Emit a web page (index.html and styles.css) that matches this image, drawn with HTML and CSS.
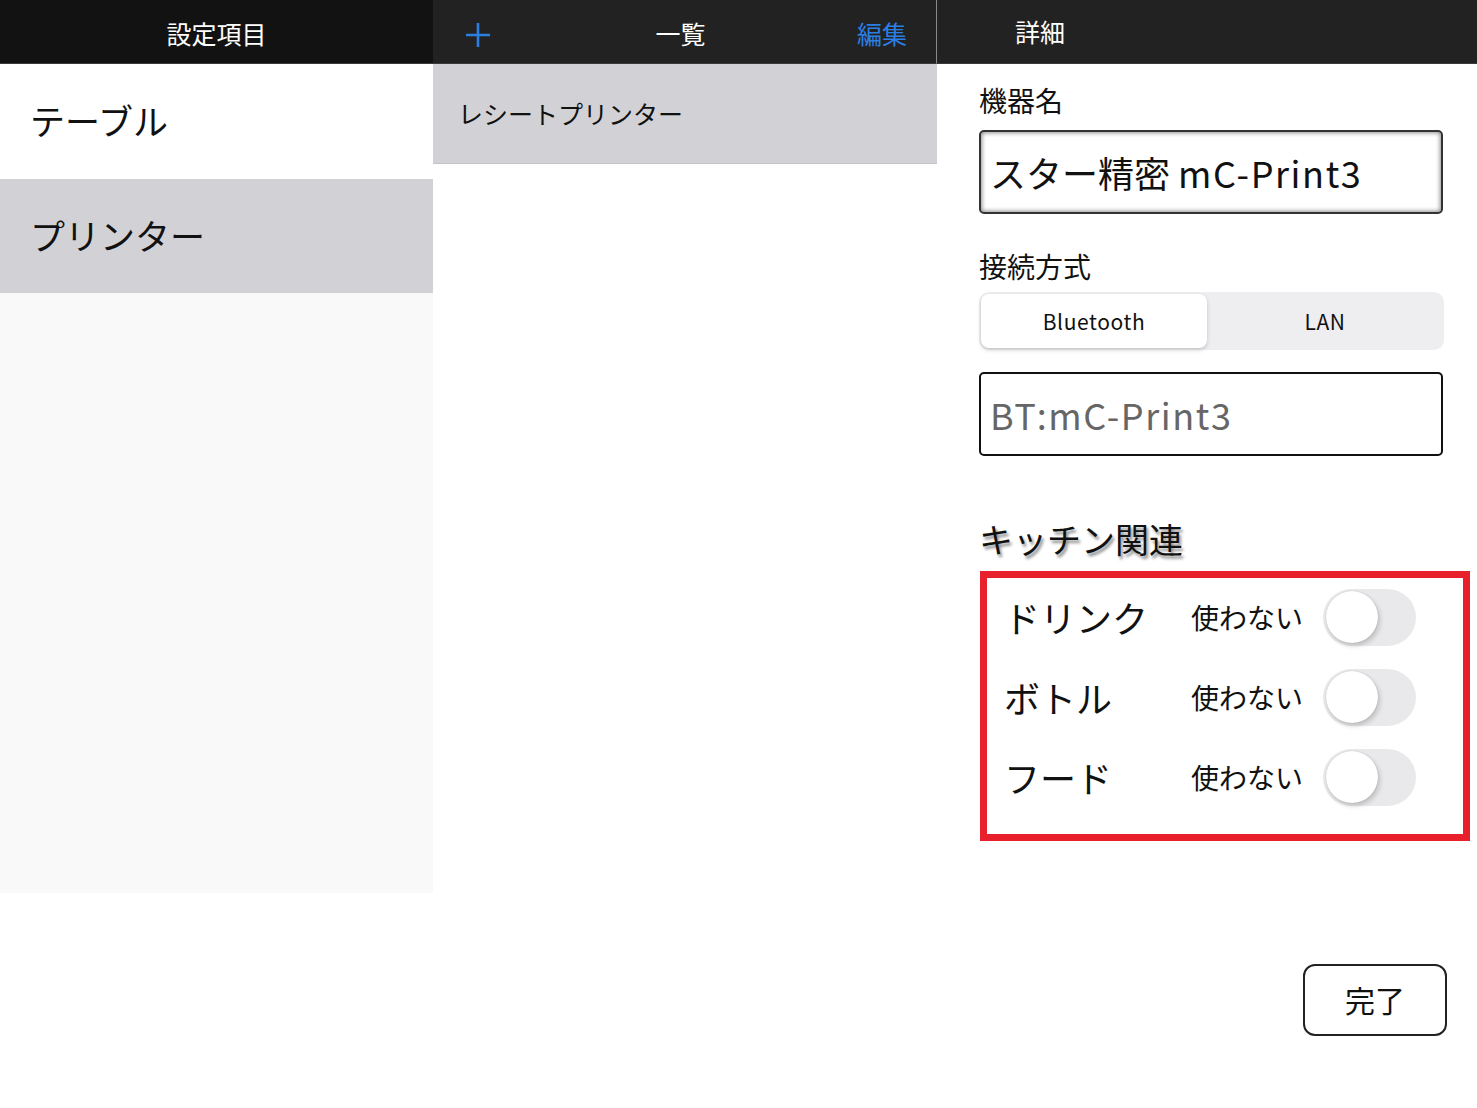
FILE: index.html
```html
<!DOCTYPE html>
<html lang="ja">
<head>
<meta charset="utf-8">
<title>設定</title>
<link rel="stylesheet" href="styles.css">
</head>
<body>
<div class="app">
  <section class="col col-left">
    <header class="bar bar-left"><span class="bar-title">設定項目</span></header>
    <div class="left-body">
      <div class="left-row">テーブル</div>
      <div class="left-row selected">プリンター</div>
      <div class="left-fill"></div>
    </div>
  </section>
  <section class="col col-mid">
    <header class="bar bar-mid">
      <svg class="plus" width="28" height="28" viewBox="0 0 28 28"><path d="M14 2V26M2 14H26" stroke="#2b7fe3" stroke-width="2.6" fill="none"/></svg>
      <span class="bar-title">一覧</span>
      <span class="bar-action">編集</span>
    </header>
    <div class="mid-row">レシートプリンター</div>
  </section>
  <section class="col col-right">
    <header class="bar bar-right"><span class="bar-title">詳細</span></header>
    <div class="detail">
      <div class="label l-name">機器名</div>
      <div class="field field-name">スター精密 <span class="latin">mC-Print3</span></div>
      <div class="label l-conn">接続方式</div>
      <div class="segment">
        <div class="seg seg-on">Bluetooth</div>
        <div class="seg">LAN</div>
      </div>
      <div class="field field-bt"><span class="latin">BT:mC-Print3</span></div>
      <div class="section-title">キッチン関連</div>
      <div class="kitchen">
        <div class="k-row"><span class="k-name">ドリンク</span><span class="k-state">使わない</span><span class="toggle"><span class="knob"></span></span></div>
        <div class="k-row"><span class="k-name">ボトル</span><span class="k-state">使わない</span><span class="toggle"><span class="knob"></span></span></div>
        <div class="k-row"><span class="k-name">フード</span><span class="k-state">使わない</span><span class="toggle"><span class="knob"></span></span></div>
      </div>
      <div class="done">完了</div>
    </div>
  </section>
</div>
</body>
</html>
```

FILE: styles.css
```css
* { box-sizing: border-box; }
html, body {
  margin: 0;
  padding: 0;
  background: #ffffff;
  font-family: "Noto Sans CJK JP", "Noto Sans", sans-serif;
  color: #111111;
}
.app {
  display: grid;
  grid-template-columns: 433px 504px 1fr;
  width: 1477px;
  height: 1108px;
  overflow: hidden;
}
.col { display: flex; flex-direction: column; }
.bar {
  height: 64px;
  display: flex;
  align-items: center;
  color: #ffffff;
  font-size: 25px;
  border-bottom: 1px solid #3a3a3a;
}
.bar-title { line-height: 1; }
.bar-left { background: #121212; justify-content: center; padding-top: 4px; }
.bar-mid {
  background: #222222;
  justify-content: space-between;
  padding: 4px 29px 0 31px;
  border-right: 1px solid #8a8a8a;
}
.bar-mid .bar-title { margin-left: 12px; }
.bar-action { color: #2b7fe3; line-height: 1; }
.plus { display: block; margin-top: 2px; }
.bar-right { background: #222222; padding-left: 78px; padding-bottom: 1px; }

.left-body { display: flex; flex-direction: column; }
.left-row {
  height: 115px;
  display: flex;
  align-items: center;
  padding-left: 30px;
  padding-bottom: 4px;
  font-size: 35px;
  background: #ffffff;
}
.left-row.selected { background: #d1d1d6; height: 114px; }
.left-fill { height: 600px; background: #f9f9f9; }

.mid-row {
  height: 100px;
  background: #d1d1d6;
  display: flex;
  align-items: center;
  padding-left: 25px;
  padding-bottom: 2px;
  font-size: 25px;
  border-bottom: 1px solid #c4c4c8;
}

.detail {
  display: flex;
  flex-direction: column;
  padding-left: 42px;
}
.label { font-size: 28px; line-height: 40px; }
.l-name { margin-top: 16px; }
.field {
  width: 464px;
  height: 84px;
  border: 2px solid #222;
  border-radius: 5px;
  display: flex;
  align-items: center;
  padding-left: 9px;
  font-size: 36px;
  line-height: 1;
  white-space: pre;
}
.latin { letter-spacing: 1.6px; }
.field-name {
  margin-top: 10px;
  border-color: #333;
  box-shadow: inset 0 0 4px 1px rgba(0,0,0,0.45);
  color: #111;
}
.l-conn { margin-top: 32px; }
.segment {
  margin-top: 6px;
  width: 465px;
  height: 58px;
  background: #eeeef0;
  border-radius: 10px;
  display: flex;
  align-items: center;
  padding: 2px;
}
.seg {
  flex: 0 0 236px;
  height: 54px;
  display: flex;
  align-items: center;
  justify-content: center;
  font-size: 21px;
  letter-spacing: 0.6px;
  color: #111;
}
.seg-on {
  flex: 0 0 226px;
  background: #ffffff;
  border-radius: 8px;
  box-shadow: 0 2px 4px rgba(0,0,0,0.18);
}
.field-bt {
  margin-top: 22px;
  color: #666666;
  border-color: #111;
}
.section-title {
  margin-top: 61px;
  font-size: 34px;
  line-height: 44px;
  text-shadow: 2px 3px 3px rgba(0,0,0,0.45);
}
.kitchen {
  margin-top: 10px;
  margin-left: 1px;
  width: 490px;
  height: 270px;
  border: 7px solid #e8202b;
  padding: 0 0 0 17px;
  display: flex;
  flex-direction: column;
}
.k-row {
  height: 80px;
  display: flex;
  align-items: center;
}
.k-row:first-child { margin-top: -1px; }
.k-name { width: 187px; font-size: 36px; line-height: 1; }
.k-state { width: 132px; font-size: 28px; line-height: 1; }
.toggle {
  width: 93px;
  height: 57px;
  border-radius: 29px;
  background: #e9e9eb;
  display: flex;
  align-items: center;
  padding-left: 3px;
}
.knob {
  width: 52px;
  height: 52px;
  border-radius: 50%;
  background: #ffffff;
  box-shadow: 2px 3px 5px rgba(0,0,0,0.18), 0 0 1px rgba(0,0,0,0.25);
}
.done {
  align-self: flex-end;
  margin-right: 30px;
  margin-top: 123px;
  width: 144px;
  height: 72px;
  border: 2px solid #222;
  border-radius: 12px;
  display: flex;
  align-items: center;
  justify-content: center;
  font-size: 30px;
  padding-bottom: 2px;
}
```
